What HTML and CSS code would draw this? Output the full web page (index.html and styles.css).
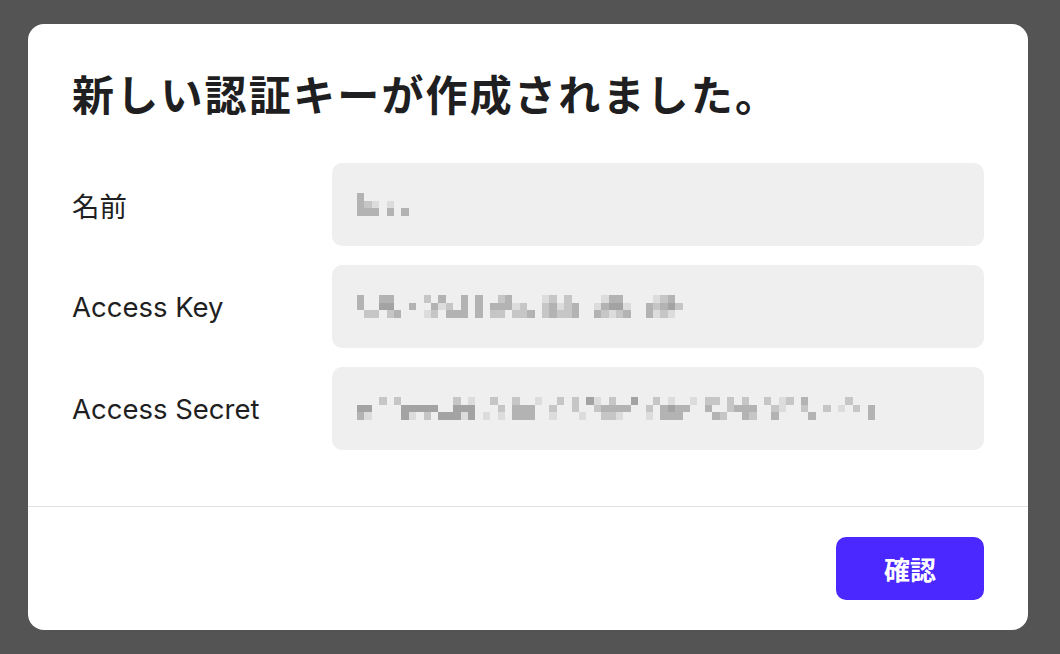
FILE: index.html
```html
<!DOCTYPE html>
<html lang="ja">

<head>
  <meta charset="UTF-8">
  <title>認証キー</title>
  <link rel="stylesheet" href="styles.css">
</head>

<body>
  <div class="modal">
    <div class="modal-body">
      <h1>新しい認証キーが作成されました。</h1>

      <div class="fields">
        <div class="label">名前</div>
        <div class="value">
          <span class="mosaic" data-rows="c.......|cba.a...|ccc.c.c."></span>
        </div>

        <div class="label">Access Key</div>
        <div class="value">
          <span class="mosaic" data-rows="c..cc....b.c..c.c..bc....ab.b....acc....abc..|c..dd..c..cab.c.c.cccab..bcabc..acdda..cbcdb.|.bb.bc...ab.ccc.c.bb.bbc.bcbbc..cbabc..caba.."></span>
        </div>

        <div class="label">Access Secret</div>
        <div class="value">
          <span class="mosaic" data-rows="...b.b.......b.a..b..b..a..b.b.da.b..d..b.a..a.bb.b.b..b.ab.c.....b...|dd....ddddd..ddd...b.ccc..b..b..bcccc..b.cdcc..c..bccc..ba..b..b.a.b.c|ca....da.b.dddad.a.a.ccc..a...a..bba...a.ccc....cb..cb..c....c.......c"></span>
        </div>
      </div>
    </div>

    <div class="modal-footer">
      <button class="btn-primary">確認</button>
    </div>
  </div>

  <script src="mosaic.js"></script>
</body>

</html>
```

FILE: styles.css
```css
body {
  font-family: Inter, "Noto Sans CJK JP", sans-serif;
  background-color: #545454;
  color: #1f1f22;
  margin: 0;
  padding: 24px 0 0 28px;
}

.modal {
  width: 1000px;
  height: 606px;
  background-color: #fff;
  border-radius: 16px;
  display: flex;
  flex-direction: column;
  overflow: hidden;
}

.modal-body {
  padding: 46px 44px 56px;
  border-bottom: 1px solid #e2e2e2;
}

h1 {
  margin: 0 0 41px;
  font-size: 42px;
  line-height: 52px;
  font-weight: 700;
  letter-spacing: 2.2px;
}

.fields {
  display: grid;
  grid-template-columns: 260px 1fr;
  grid-auto-rows: 83px;
  row-gap: 19px;
}

.label {
  display: flex;
  align-items: center;
  font-size: 27.5px;
}

.value {
  display: flex;
  align-items: center;
  padding: 0 25px;
  background-color: #efefef;
  border-radius: 10px;
}

.mosaic svg {
  display: block;
}

.modal-footer {
  display: flex;
  justify-content: flex-end;
  padding: 30px 44px;
}

.btn-primary {
  width: 148px;
  height: 63px;
  background-color: #4a28ff;
  color: #fff;
  border: none;
  border-radius: 10px;
  font-family: Inter, "Noto Sans CJK JP", sans-serif;
  font-size: 26px;
  font-weight: 700;
  cursor: pointer;
}
```

FILE: mosaic.js
```js
// pixelated placeholder for hidden values
const shades = { a: '#dcdcdc', b: '#c6c6c6', c: '#b3b3b3', d: '#a3a3a3' };
const cellW = 7.4;
const cellH = 7.7;

document.querySelectorAll('.mosaic').forEach(el => {
  const rows = el.dataset.rows.split('|');
  const cols = Math.max(...rows.map(r => r.length));
  let rects = '';
  rows.forEach((row, y) => {
    [...row].forEach((ch, x) => {
      if (shades[ch]) {
        rects += `<rect x="${(x * cellW).toFixed(1)}" y="${(y * cellH).toFixed(1)}" width="${cellW}" height="${cellH}" fill="${shades[ch]}"/>`;
      }
    });
  });
  const w = (cols * cellW).toFixed(1);
  const h = (rows.length * cellH).toFixed(1);
  el.innerHTML = `<svg width="${w}" height="${h}" viewBox="0 0 ${w} ${h}" shape-rendering="crispEdges">${rects}</svg>`;
});
```
